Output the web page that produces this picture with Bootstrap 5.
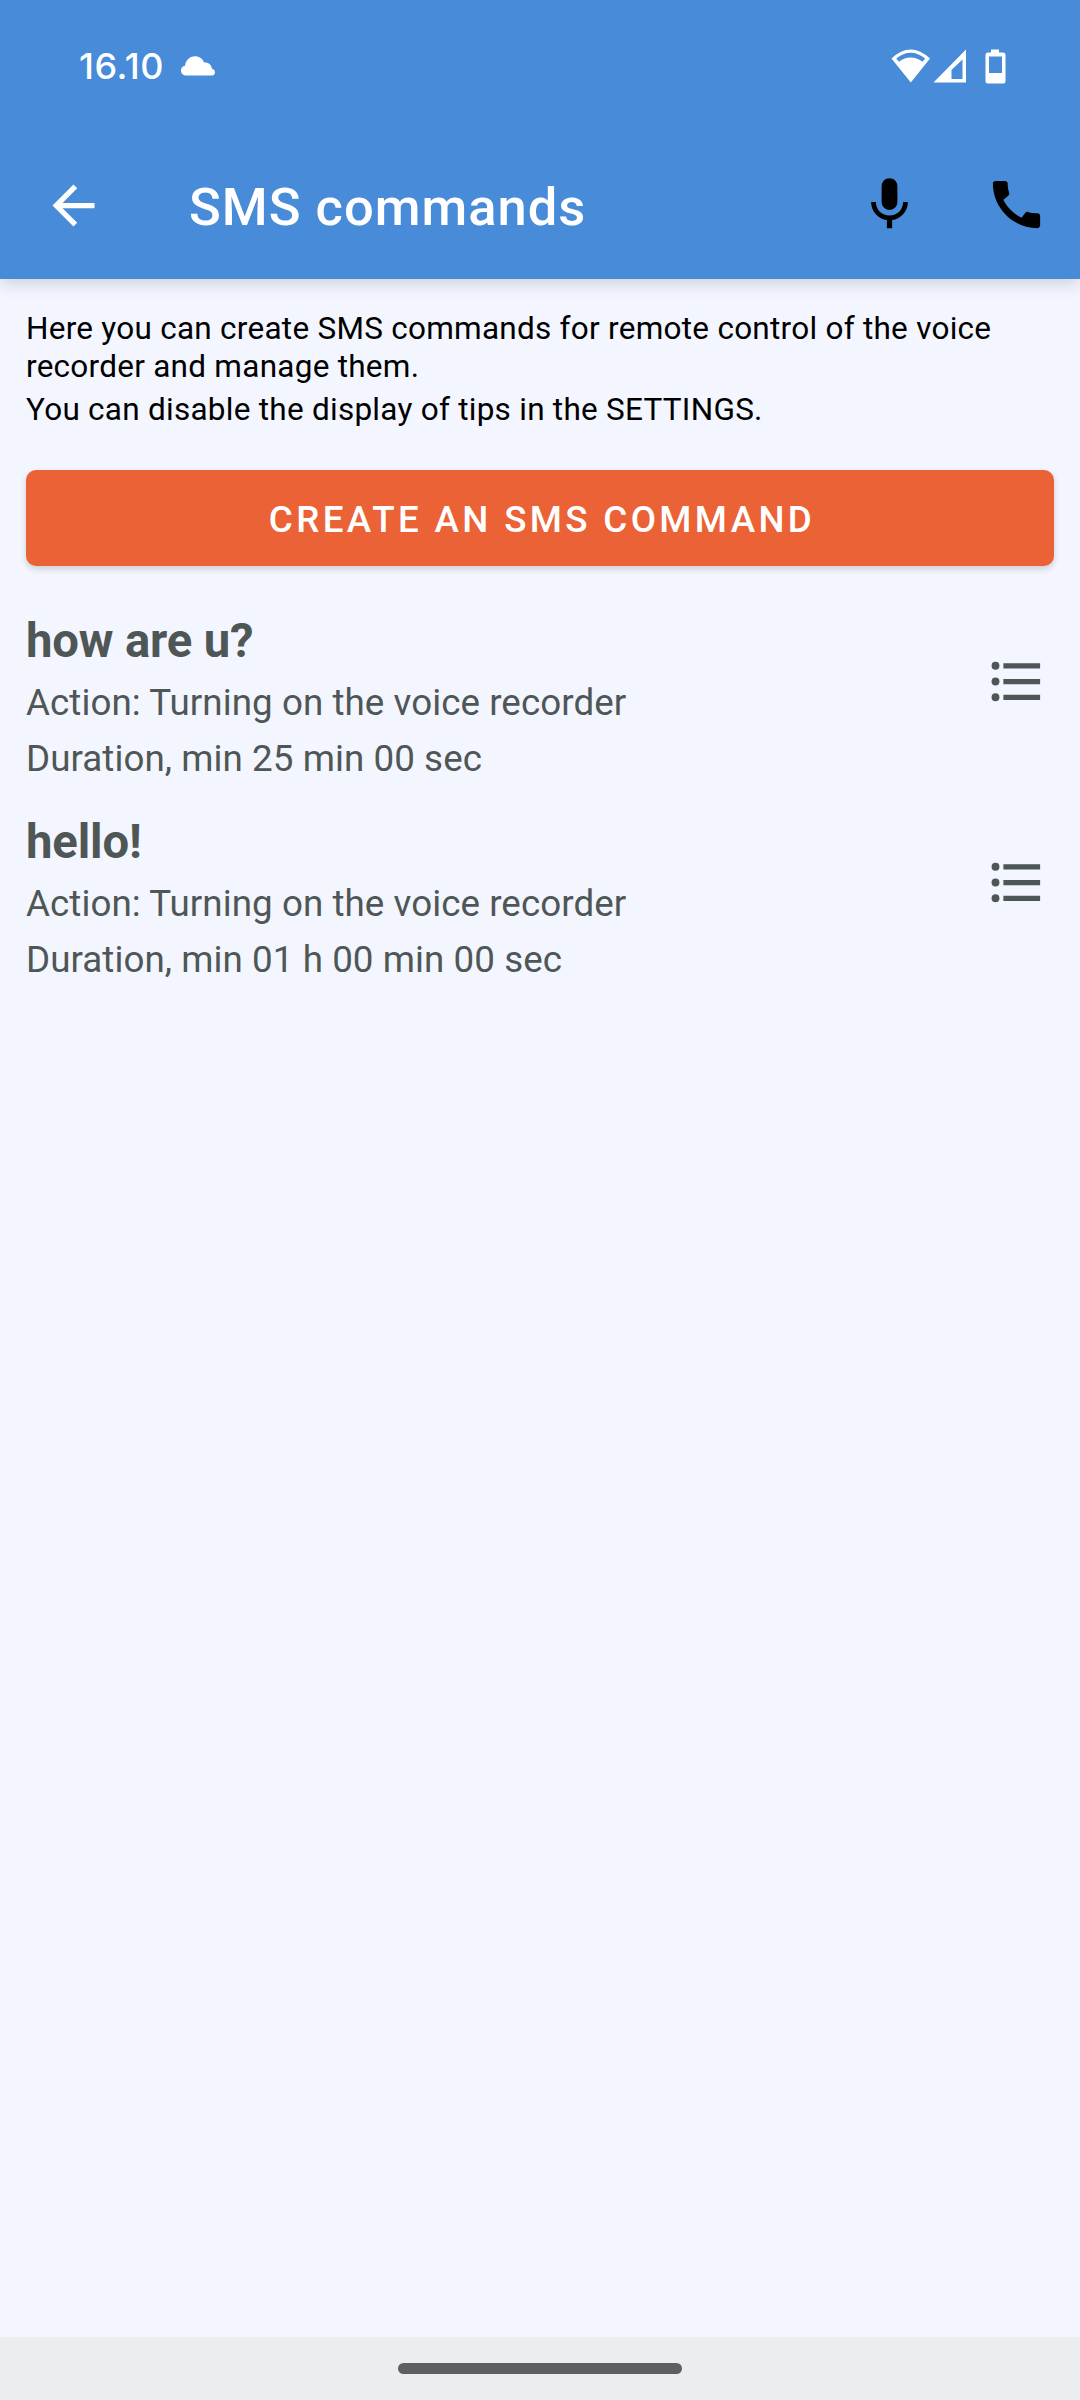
<!DOCTYPE html>
<html lang="en">
<head>
<meta charset="utf-8">
<meta name="viewport" content="width=device-width, initial-scale=1">
<title>SMS commands</title>
<link href="https://cdn.jsdelivr.net/npm/bootstrap@5.3.0/dist/css/bootstrap.min.css" rel="stylesheet">
<style>
body{font-family:Roboto,sans-serif;background:#f3f6ff;color:#000;height:2400px;overflow:hidden}
svg{display:block;flex:none}
.app-top{background:#488bd8;height:279px;box-shadow:0 4px 16px rgba(0,0,0,.16);z-index:1}
.status-row{height:132px;padding:0 69px 0 79px;color:#fff}
.clock{font:500 36px/1 Inter,sans-serif;letter-spacing:.5px;width:101px}
.toolbar-row{height:147px;padding:0 32px 0 42px}
.ico{width:63px;height:63px}
.app-title{font-size:52.5px;font-weight:500;line-height:62px;letter-spacing:1px;margin:2px 0 0 84px;color:#fff}
.toolbar-actions{gap:64px;margin-bottom:2px}
.content-area{padding:31px 26px 0}
.tip{font-size:31.5px;line-height:38px;letter-spacing:.26px}
.tip + .tip{margin-top:5px}
.create-btn{height:96px;margin-top:41px;border:0;border-radius:10px;background:#eb6237;color:#fff;font-size:36.75px;font-weight:500;letter-spacing:3.35px;line-height:44px;padding:3px 0 0 4px;box-shadow:0 3px 6px rgba(0,0,0,.16)}
.create-btn:hover{background:#eb6237;color:#fff}
.cmd-list{padding-top:47px;color:#4f5656}
.cmd-item{height:201px;padding-right:6px}
.cmd-name{font-size:47.25px;font-weight:700;line-height:56px;letter-spacing:-.15px;margin:0 0 6px}
.cmd-line{font-size:36.75px;line-height:56px;letter-spacing:.06px}
.cmd-menu{margin-top:37px;color:#4f5656}
.nav-strip{height:63px;background:#ecedef}
.nav-handle{width:284px;height:11px;background:#5e5f61}
</style>
</head>
<body class="d-flex flex-column">
<header class="app-top position-relative">
  <div class="status-row d-flex align-items-center">
    <span class="clock">16.10</span>
    <svg width="36" height="20" viewBox="0 0 36 20" fill="#fff"><path d="M5 19.500A5 5 0 0 1 5 9.700C5.700 4.400 9.700.3 15 .3c4.300 0 7.700 2.300 9 6.200 4.200-.6 7.500 2 8 6.200A3.500 3.500 0 0 1 32.500 19.500z"/></svg>
    <div class="ms-auto d-flex align-items-center">
      <svg width="120" height="36" viewBox="0 0 120 36" fill="#fff">
        <path fill-rule="evenodd" d="M.5 10.500Q19.500-7.500 39 10.500L19.800 34.600zM5.300 10.500L8 13.700Q19.500 5.500 31.500 13.700L34.200 10.500Q19.500-1 5.300 10.500z"/>
        <path fill-rule="evenodd" d="M75 1.500V34.500H42.500zM71.500 11.500L60.500 22V31H71.500z"/>
        <path fill-rule="evenodd" d="M100 1.500h8v3h4a2.500 2.500 0 0 1 2.500 2.500v26a2.500 2.500 0 0 1-2.500 2.500H97a2.500 2.500 0 0 1-2.500-2.500V7A2.500 2.500 0 0 1 97 4.500h3zM98 8.500V25h13V8.500z"/>
      </svg>
    </div>
  </div>
  <div class="toolbar-row d-flex align-items-center">
    <svg class="ico" viewBox="0 0 24 24" fill="#fff"><path d="M20 11H7.830l5.590-5.590L12 4l-8 8 8 8 1.410-1.410L7.830 13H20z"/></svg>
    <h1 class="app-title">SMS commands</h1>
    <div class="toolbar-actions d-flex ms-auto">
      <svg class="ico" viewBox="0 0 24 24"><path d="M12 14c1.660 0 3-1.340 3-3V5c0-1.660-1.340-3-3-3S9 3.340 9 5v6c0 1.660 1.340 3 3 3z"/><path d="M17.200 11c0 2.870-2.330 5.200-5.200 5.200S6.800 13.870 6.800 11H5c0 3.530 2.610 6.430 6 6.920V21h2v-3.080c3.390-.49 6-3.390 6-6.920z"/></svg>
      <svg class="ico" viewBox="0 0 24 24"><path d="M20.010 15.380c-1.230 0-2.420-.2-3.530-.56-.35-.12-.74-.03-1.010.24l-1.570 1.970c-2.830-1.350-5.480-3.900-6.890-6.830l1.950-1.660c.27-.28.35-.67.24-1.020-.37-1.110-.56-2.300-.56-3.530 0-.54-.45-.99-.99-.99H4.190C3.650 3 3 3.240 3 3.990 3 13.280 10.730 21 20.010 21c.71 0 .99-.63.99-1.180v-3.450c0-.54-.45-.99-.99-.99z"/></svg>
    </div>
  </div>
</header>
<main class="content-area flex-grow-1 d-flex flex-column">
  <p class="tip mb-0">Here you can create SMS commands for remote control of the voice recorder and manage them.</p>
  <p class="tip mb-0">You can disable the display of tips in the SETTINGS.</p>
  <button type="button" class="btn create-btn w-100">CREATE AN SMS COMMAND</button>
  <div class="cmd-list">
    <article class="cmd-item d-flex justify-content-between align-items-start">
      <div><h2 class="cmd-name">how are u?</h2><div class="cmd-line">Action: Turning on the voice recorder</div><div class="cmd-line">Duration, min 25 min 00 sec</div></div>
      <svg class="ico cmd-menu" viewBox="0 0 24 24" fill="currentColor"><circle cx="4" cy="12" r="1.500"/><circle cx="4" cy="6" r="1.500"/><circle cx="4" cy="18" r="1.500"/><path d="M7 5h14v2H7zM7 11h14v2H7zM7 17h14v2H7z"/></svg>
    </article>
    <article class="cmd-item d-flex justify-content-between align-items-start">
      <div><h2 class="cmd-name">hello!</h2><div class="cmd-line">Action: Turning on the voice recorder</div><div class="cmd-line">Duration, min 01 h 00 min 00 sec</div></div>
      <svg class="ico cmd-menu" viewBox="0 0 24 24" fill="currentColor"><circle cx="4" cy="12" r="1.500"/><circle cx="4" cy="6" r="1.500"/><circle cx="4" cy="18" r="1.500"/><path d="M7 5h14v2H7zM7 11h14v2H7zM7 17h14v2H7z"/></svg>
    </article>
  </div>
</main>
<footer class="nav-strip d-flex justify-content-center align-items-center"><div class="nav-handle rounded-pill"></div></footer>
<script src="https://cdn.jsdelivr.net/npm/bootstrap@5.3.0/dist/js/bootstrap.bundle.min.js"></script>
</body>
</html>
